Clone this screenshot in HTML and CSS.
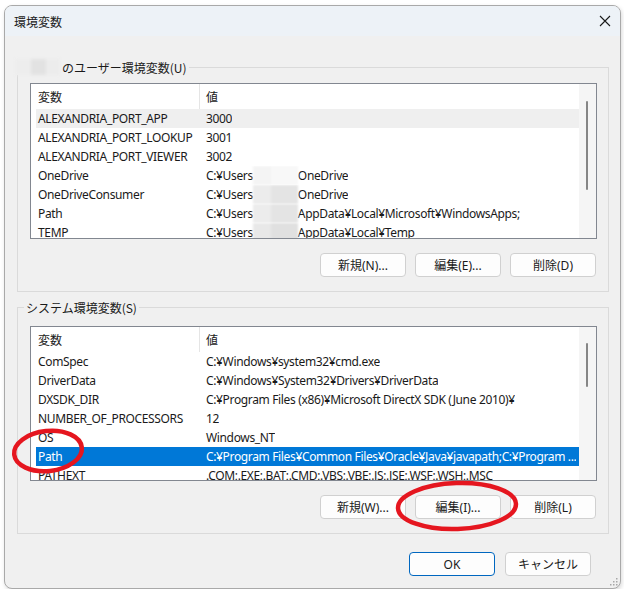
FILE: index.html
```html
<!DOCTYPE html>
<html>
<head>
<meta charset="utf-8">
<title>環境変数</title>
<link rel="stylesheet" href="styles.css">
</head>
<body>
<div class="window">
	<div class="titlebar">
		<span class="title">環境変数</span>
		<svg class="close" width="12" height="12" viewBox="0 0 12 12"><path d="M1 1L11 11M11 1L1 11" stroke="#1a1a1a" stroke-width="1.1" fill="none"/></svg>
	</div>
	<div class="content">
		<fieldset class="group user">
			<legend><span class="blur"></span>のユーザー環境変数(U)</legend>
			<div class="list">
				<div class="rows">
					<div class="row head"><span class="name">変数</span><span class="value">値</span></div>
					<div class="row hover"><span class="name">ALEXANDRIA_PORT_APP</span><span class="value">3000</span></div>
					<div class="row"><span class="name">ALEXANDRIA_PORT_LOOKUP</span><span class="value">3001</span></div>
					<div class="row"><span class="name">ALEXANDRIA_PORT_VIEWER</span><span class="value">3002</span></div>
					<div class="row"><span class="name">OneDrive</span><span class="value">C:¥Users<span class="mask m1"></span>OneDrive</span></div>
					<div class="row"><span class="name">OneDriveConsumer</span><span class="value">C:¥Users<span class="mask m2"></span>OneDrive</span></div>
					<div class="row"><span class="name">Path</span><span class="value">C:¥Users<span class="mask m2"></span>AppData¥Local¥Microsoft¥WindowsApps;</span></div>
					<div class="row"><span class="name">TEMP</span><span class="value">C:¥Users<span class="mask m3"></span>AppData¥Local¥Temp</span></div>
				</div>
				<div class="scroll"><div class="thumb t1"></div></div>
			</div>
			<div class="buttons">
				<button>新規(N)...</button>
				<button>編集(E)...</button>
				<button>削除(D)</button>
			</div>
		</fieldset>
		<fieldset class="group system">
			<legend>システム環境変数(S)</legend>
			<div class="list">
				<div class="rows">
					<div class="row head"><span class="name">変数</span><span class="value">値</span></div>
					<div class="row"><span class="name">ComSpec</span><span class="value">C:¥Windows¥system32¥cmd.exe</span></div>
					<div class="row"><span class="name">DriverData</span><span class="value">C:¥Windows¥System32¥Drivers¥DriverData</span></div>
					<div class="row"><span class="name">DXSDK_DIR</span><span class="value">C:¥Program Files (x86)¥Microsoft DirectX SDK (June 2010)¥</span></div>
					<div class="row"><span class="name">NUMBER_OF_PROCESSORS</span><span class="value">12</span></div>
					<div class="row"><span class="name">OS</span><span class="value">Windows_NT</span></div>
					<div class="row selected"><span class="name">Path</span><span class="value">C:¥Program Files¥Common Files¥Oracle¥Java¥javapath;C:¥Program ...</span></div>
					<div class="row"><span class="name">PATHEXT</span><span class="value">.COM;.EXE;.BAT;.CMD;.VBS;.VBE;.JS;.JSE;.WSF;.WSH;.MSC</span></div>
				</div>
				<div class="scroll"><div class="thumb t2"></div></div>
			</div>
			<div class="buttons">
				<button>新規(W)...</button>
				<button>編集(I)...</button>
				<button>削除(L)</button>
			</div>
		</fieldset>
		<div class="footer">
			<button class="default">OK</button>
			<button>キャンセル</button>
		</div>
	</div>
	<svg class="grip" width="8" height="8" viewBox="0 0 8 8" fill="#a8a8a8"><rect x="6" y="0" width="1.5" height="1.5"/><rect x="3" y="3" width="1.5" height="1.5"/><rect x="6" y="3" width="1.5" height="1.5"/><rect x="0" y="6" width="1.5" height="1.5"/><rect x="3" y="6" width="1.5" height="1.5"/><rect x="6" y="6" width="1.5" height="1.5"/></svg>
</div>
<svg class="marks" width="624" height="593" viewBox="0 0 624 593">
	<ellipse cx="48" cy="451" rx="34" ry="20" transform="rotate(-6 48 451)" fill="none" stroke="#e5161f" stroke-width="4.5"/>
	<ellipse cx="457" cy="506" rx="59" ry="23" transform="rotate(-2 457 506)" fill="none" stroke="#e5161f" stroke-width="4.5"/>
</svg>
</body>
</html>
```
FILE: styles.css
```css
body{
	margin: 0;
	background: #ffffff;
	font-family: "Noto Sans", "Noto Sans CJK JP", sans-serif;
	font-size: 12px;
	color: #1a1a1a;
}
.window{
	position: relative;
	box-sizing: border-box;
	width: 617px;
	height: 584px;
	margin: 5px 0 0 4px;
	background: #f0f0f0;
	border: 1px solid #a9a9a9;
	border-radius: 8px;
	box-shadow: 1px 2px 4px rgba(0,0,0,0.15);
	overflow: hidden;
}
.titlebar{
	display: flex;
	align-items: center;
	justify-content: space-between;
	height: 30px;
	padding: 0 9px 0 9px;
	background: #edf2f7;
}
.title{
	font-family: "Noto Sans CJK JP", sans-serif;
}
.content{
	padding: 0 11px 0 12px;
}
.group{
	margin: 0;
	min-width: 0;
	border: 1px solid #dadada;
	padding: 8px 11px 14px 12px;
}
.user{
	margin-top: 23px;
}
.system{
	margin-top: 7px;
	padding-top: 11px;
}
legend{
	display: flex;
	align-items: center;
	height: 16px;
	padding: 0 2px;
	margin-left: -6px;
	font-family: "Noto Sans CJK JP", sans-serif;
}
.user legend{
	margin-left: -15px;
	padding-left: 0;
}
.blur{
	display: inline-block;
	width: 45px;
	height: 16px;
	margin-right: 2px;
	background: linear-gradient(90deg, #ededed 0 35%, #e2e2e2 35% 70%, #ececec 70%);
	filter: blur(1.5px);
}
.list{
	display: flex;
	height: 156px;
	box-sizing: border-box;
	background: #ffffff;
	border: 1px solid #828790;
}
.system .list{
	height: 155px;
}
.rows{
	flex: 1;
	min-width: 0;
	padding-left: 5px;
	overflow: hidden;
	letter-spacing: -0.35px;
}
.row{
	display: flex;
	align-items: center;
	height: 19px;
	white-space: nowrap;
}
.row.head{
	height: 25px;
	font-family: "Noto Sans CJK JP", sans-serif;
	letter-spacing: 0;
}
.row.hover{
	background: #efefef;
}
.row.selected{
	background: #0078d7;
	color: #ffffff;
}
.name{
	flex: none;
	box-sizing: border-box;
	width: 164px;
	padding-left: 2px;
}
.head .name{
	border-right: 1px solid #e5e5e5;
	height: 25px;
	line-height: 25px;
}
.value{
	min-width: 0;
	padding-left: 6px;
	display: flex;
	align-items: center;
	overflow: hidden;
	text-overflow: ellipsis;
}
.mask{
	display: inline-block;
	flex: none;
	width: 45px;
	height: 19px;
	filter: blur(1px);
}
.m1{ background: linear-gradient(90deg, #f4f4f4 0 40%, #f8f8f8 40%); }
.m2{ background: linear-gradient(90deg, #ececec 0 40%, #e4e4e4 40%); }
.m3{ background: linear-gradient(90deg, #e8e8e8 0 40%, #e0e0e0 40%); }
.scroll{
	flex: none;
	width: 17px;
	background: #f5f5f5;
}
.thumb{
	width: 2px;
	margin-left: 7px;
	background: #868686;
	border-radius: 1px;
}
.t1{
	margin-top: 17px;
	height: 89px;
}
.t2{
	margin-top: 16px;
	height: 44px;
}
.buttons{
	display: flex;
	justify-content: flex-end;
	gap: 9px;
	margin-top: 14px;
	padding-right: 1px;
}
button{
	box-sizing: border-box;
	width: 86px;
	height: 24px;
	padding: 0;
	background: #fdfdfd;
	border: 1px solid #d0d0d0;
	border-radius: 4px;
	font-family: "Noto Sans", "Noto Sans CJK JP", sans-serif;
	font-size: 12px;
	color: #1a1a1a;
}
button.default{
	border-color: #0067c0;
}
.footer{
	display: flex;
	justify-content: flex-end;
	gap: 10px;
	margin-top: 18px;
	padding-right: 18px;
}
.grip{
	position: absolute;
	right: 2px;
	bottom: 2px;
}
.marks{
	position: absolute;
	left: 0;
	top: 0;
	pointer-events: none;
}
```
